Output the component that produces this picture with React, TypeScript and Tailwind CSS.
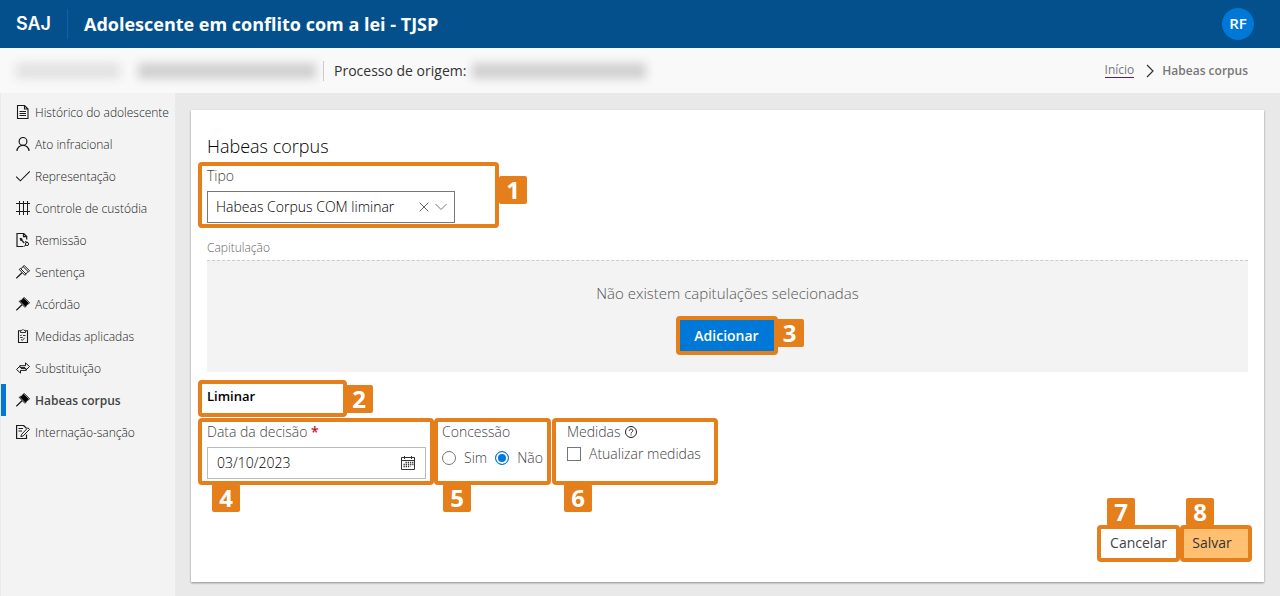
import { useState, type ReactNode } from "react";

const ink = {
  fill: "none",
  stroke: "#1b1b1b",
  strokeWidth: 1,
} as const;

function Icon({ children }: { children: ReactNode }) {
  return (
    <svg viewBox="0 0 14 14" className="h-3.5 w-3.5 shrink-0" aria-hidden="true" {...ink}>
      {children}
    </svg>
  );
}

const DocumentIcon = () => (
  <Icon>
    <path d="M1.500.5h7l3.500 3.500v9.500H1.500z M8.500.5v3.500h3.500" strokeWidth="1.100" />
    <path d="M3.500 6.500h6.500 M3.500 8.500h6.500 M3.500 10.500h6.500" />
  </Icon>
);

const PersonIcon = () => (
  <Icon>
    <circle cx="7" cy="4.4" r="3.9" strokeWidth="1.2" />
    <path d="M1 14c0-3.200 2.500-5.700 6-5.700s6 2.500 6 5.700" strokeWidth="1.2" />
  </Icon>
);

const CheckIcon = () => (
  <Icon>
    <path d="M.2 7.600l4.200 4.200L13.800 2.400" strokeWidth="1.100" />
  </Icon>
);

const GridIcon = () => (
  <Icon>
    <path d="M3.500 0v14 M7.500 0v14 M11.500 0v14 M0 2.500h14 M0 10.500h14" />
  </Icon>
);

const DocumentLinkIcon = () => (
  <Icon>
    <path d="M7.500 13.500H1V.5h6.700l3 3v3 M7.500.7v3h3 M4.500 6l3.800 4" strokeWidth="1.200" />
    <path d="M4 5.300l2.300.7-1.500 1.500z" fill="#1b1b1b" />
    <circle cx="11" cy="11" r="1.600" />
    <path d="M8 13.400l2-1.500 M9 8.500l3 1" />
  </Icon>
);

const GavelIcon = ({ solid = false }: { solid?: boolean }) => (
  <Icon>
    <path d="M.3 13.300L6 7.700" strokeWidth="1.300" />
    <path d="M3.200 4.400l1.200-1 5.700 5.700-1.200 1.200z M7 1.500L8.200.5l5.400 5.300-1.200 1.100z" />
    <path d="M4.800 4.300L7.700 1.700l4.300 4.200-2.700 2.800z" strokeWidth="1.100" fill={solid ? "#000" : "none"} stroke={solid ? "#000" : "none"} />
    <path d="M5 3.700l2.300-2.200 M9.900 8.800l2.300-2.200" />
  </Icon>
);

const ClipboardIcon = () => (
  <Icon>
    <path d="M4 1.800H2.500v11.700h9V1.800H10" strokeWidth="1.100" />
    <path d="M4.500 3.500V1.400H6L7 .4l1 1h1.500v2.100z M4.200 6.200l.7.700 1-1.200 M7 6.500h2.500 M4.200 8.500h2.500 M5 10.300l1.300 1.200 2.300-2.700" strokeWidth=".9" />
  </Icon>
);

const SwapIcon = () => (
  <Icon>
    <path d="M3.500 4.700h6V1.900L13.500 5.500 10 9V7.400H5 M10.500 9.400h-6v2.700L.5 8.500 4 5v1.600h5" />
  </Icon>
);

const EditDocumentIcon = () => (
  <Icon>
    <path d="M10.500 9.500v4H.6V.5h7l2.900 2.700 M2.500 3.500h4.500 M2.500 6h3.500" strokeWidth="1.200" />
    <path d="M5.500 9.500l6.300-6.700 1.700 1.600-6.300 6.500-2.300.7z" />
  </Icon>
);

const menu: { label: string; icon: ReactNode; active?: boolean }[] = [
  { label: "Histórico do adolescente", icon: <DocumentIcon /> },
  { label: "Ato infracional", icon: <PersonIcon /> },
  { label: "Representação", icon: <CheckIcon /> },
  { label: "Controle de custódia", icon: <GridIcon /> },
  { label: "Remissão", icon: <DocumentLinkIcon /> },
  { label: "Sentença", icon: <GavelIcon /> },
  { label: "Acórdão", icon: <GavelIcon solid /> },
  { label: "Medidas aplicadas", icon: <ClipboardIcon /> },
  { label: "Substituição", icon: <SwapIcon /> },
  { label: "Habeas corpus", icon: <GavelIcon solid />, active: true },
  { label: "Internação-sanção", icon: <EditDocumentIcon /> },
];

function Marker({ n, place, className = "", children }: { n: number; place: string; className?: string; children: ReactNode }) {
  return (
    <div className={`relative rounded-sm border-4 border-[#e47f1c] ${className}`}>
      {children}
      <span
        className={`absolute flex h-7 w-7 items-center justify-center rounded-xs bg-[#e47f1c] font-['Noto_Sans','Open_Sans',sans-serif] text-2xl leading-7 font-bold text-white ${place}`}
      >
        {n}
      </span>
    </div>
  );
}

function Redacted({ className }: { className: string }) {
  return <span aria-hidden="true" className={`h-4 blur-[5px] ${className}`} />;
}

export default function App() {
  const [tipo, setTipo] = useState("com");
  const [data, setData] = useState("03/10/2023");
  const [concessao, setConcessao] = useState("nao");

  return (
    <div className="flex min-h-screen flex-col bg-[#e9e9e9] font-['Open_Sans','Noto_Sans',sans-serif] text-sm text-[#333]">
      <header className="flex h-12 items-center bg-[#04508c] pr-[26px] pl-4 text-white">
        <span className="w-[51px] font-['Inter',sans-serif] text-lg font-semibold">SAJ</span>
        <span className="h-[30px] w-px bg-[#0d62a8]" />
        <h1 className="ml-4 text-lg leading-6 font-bold">Adolescente em conflito com a lei - TJSP</h1>
        <button type="button" className="ml-auto flex h-8 w-8 items-center justify-center rounded-full bg-[#0078d7] text-[15px] font-semibold">
          RF
        </button>
      </header>

      <div className="flex h-[45px] items-center bg-[#f9f9f9] pr-8 pl-4">
        <Redacted className="w-[104px] bg-[#e2e2e2]" />
        <Redacted className="ml-[18px] w-[178px] bg-[#d0d0d0]" />
        <span className="ml-[7px] h-5 w-px bg-[#ccc]" />
        <span className="ml-2.5 text-sm font-medium">Processo de origem:</span>
        <Redacted className="ml-1.5 w-[174px] bg-[#d0d0d0]" />
        <nav aria-label="Trilha" className="ml-auto flex items-center text-xs text-[#777]">
          <a href="#inicio" className="border-b border-[#551a8b] leading-[14px]">
            Início
          </a>
          <svg viewBox="0 0 8 14" className="mr-2 ml-3 h-3.5 w-2" fill="none" stroke="#333" strokeWidth="1.2" aria-hidden="true">
            <path d="M1 1l6 6-6 6" />
          </svg>
          <span className="font-semibold">Habeas corpus</span>
        </nav>
      </div>

      <div className="flex grow">
        <aside className="ml-px w-[174px] shrink-0 bg-[#f3f3f3] pt-[3px]">
          <ul>
            {menu.map((m) => (
              <li key={m.label}>
                <a
                  href="#menu"
                  className={`flex h-8 items-center gap-[5px] border-l-[5px] pl-2.5 text-xs whitespace-nowrap ${
                    m.active ? "border-[#0078d7] font-semibold text-[#444]" : "border-transparent font-light text-[#222]"
                  }`}
                >
                  {m.icon}
                  <span className="pt-0.5">{m.label}</span>
                </a>
              </li>
            ))}
          </ul>
        </aside>

        <main className="min-w-0 grow px-4 pt-[17px] pb-3.5">
          <form onSubmit={(e) => e.preventDefault()} className="flex flex-col bg-white pt-5 pr-3 pb-5 pl-[7px] shadow-[0_1px_2px_rgba(0,0,0,0.4)]">
            <h2 className="pl-[9px] text-lg leading-8 font-light text-black">Habeas corpus</h2>

            <Marker n={1} place="left-[calc(100%+4px)] top-2.5" className="w-[301px] px-[5px] pb-px">
              <label htmlFor="tipo" className="block text-sm leading-5 font-light text-[#444]">
                Tipo
              </label>
              <div className="relative mt-[5px] w-[248px]">
                <select
                  id="tipo"
                  value={tipo}
                  onChange={(e) => setTipo(e.target.value)}
                  className="h-8 w-full appearance-none rounded-none border border-[#777] bg-white pr-12 pl-2 text-sm font-light text-black"
                >
                  <option value="">Selecione</option>
                  <option value="com">Habeas Corpus COM liminar</option>
                  <option value="sem">Habeas Corpus SEM liminar</option>
                </select>
                <button type="button" aria-label="Limpar" onClick={() => setTipo("")} className="absolute top-[11px] right-[26px]">
                  <svg viewBox="0 0 10 10" className="h-2.5 w-2.5" fill="none" stroke="#666">
                    <path d="M.7.7l8.600 8.600 M9.300.7L.7 9.300" />
                  </svg>
                </button>
                <svg viewBox="0 0 12 8" className="pointer-events-none absolute top-3 right-2 h-2 w-3" fill="none" stroke="#777" aria-hidden="true">
                  <path d="M.5 1L6 6.500 11.500 1" />
                </svg>
              </div>
            </Marker>

            <p className="mt-2.5 pl-[9px] text-xs leading-5 font-light text-[#666]">Capitulação</p>
            <section className="mt-0.5 mr-1 ml-[9px] flex flex-col items-center border-t border-dashed border-[#ccc] bg-[#f3f3f3] pt-5 pb-4">
              <p className="text-[15px] leading-6 font-light text-[#555]">Não existem capitulações selecionadas</p>
              <Marker n={3} place="left-[calc(100%+2px)] -top-px" className="mt-[11px] mr-0.5 mb-px">
                <button type="button" className="block h-[31px] w-[94px] bg-[#0078d7] text-sm leading-5 font-semibold text-white">
                  Adicionar
                </button>
              </Marker>
            </section>

            <Marker n={2} place="left-[calc(100%+2px)] top-px" className="mt-2 w-[149px] px-[5px] pb-1">
              <h3 className="text-[13px] leading-[25px] font-semibold text-black">Liminar</h3>
            </Marker>

            <div className="mt-px flex text-sm font-light text-[#444]">
              <Marker n={4} place="left-2.5 top-[calc(100%+3px)]" className="w-[236px] px-[5px] pb-0.5">
                <label htmlFor="data" className="block leading-5">
                  Data da decisão <span className="font-semibold text-[#c8102e]">*</span>
                </label>
                <div className="mt-[5px] flex h-8 w-[219px] items-center border border-[#bbb] pr-2.5">
                  <input
                    id="data"
                    value={data}
                    onChange={(e) => setData(e.target.value)}
                    className="min-w-0 grow pl-[9px] text-sm text-black outline-none"
                  />
                  <button type="button" aria-label="Abrir calendário">
                    <svg viewBox="0 0 14 14" className="h-3.5 w-3.5" fill="none" stroke="#333">
                      <path d="M.5 1.500h13v12H.5z M.5 4.500h13 M3.500 0v3 M10.500 0v3" />
                      <path d="M4.500 6.500h8 M2.500 8.500h10 M2.500 10.500h7" strokeWidth="1.300" strokeDasharray="1.300 .9" />
                    </svg>
                  </button>
                </div>
              </Marker>

              <Marker n={5} place="left-[5px] top-[calc(100%+3px)]" className="w-[117px] pl-1">
                <fieldset>
                  <legend className="leading-5">Concessão</legend>
                  <div className="mt-1.5 flex items-center leading-5 whitespace-nowrap">
                    {[
                      ["sim", "Sim"],
                      ["nao", "Não"],
                    ].map(([value, text]) => (
                      <label key={value} className="mr-2 flex items-center gap-2 last:mr-0">
                        <input
                          type="radio"
                          name="concessao"
                          checked={concessao === value}
                          onChange={() => setConcessao(value)}
                          className="h-3.5 w-3.5 appearance-none rounded-full border border-[#767676] bg-white checked:border-[#0078d7] checked:bg-[#0078d7] checked:shadow-[inset_0_0_0_2px_white]"
                        />
                        {text}
                      </label>
                    ))}
                  </div>
                </fieldset>
              </Marker>

              <Marker n={6} place="left-2 top-[calc(100%+3px)]" className="ml-px w-[166px] pl-[11px]">
                <div className="flex items-center gap-1 leading-5">
                  <span>Medidas</span>
                  <svg viewBox="0 0 12 12" className="h-3 w-3" fill="none" stroke="#222" aria-hidden="true">
                    <circle cx="6" cy="6" r="5.500" />
                    <path d="M4.300 4.800c0-2.300 3.500-2.200 3.500-.2C7.800 6 6.100 6 6.100 7.500 M6.100 8.400v1" />
                  </svg>
                </div>
                <label className="mt-0.5 flex items-center gap-2 leading-5 whitespace-nowrap">
                  <input type="checkbox" className="h-3.5 w-3.5 appearance-none border border-[#767676] bg-white checked:bg-[#0078d7]" />
                  Atualizar medidas
                </label>
              </Marker>
            </div>

            <div className="mt-10 flex justify-end text-sm font-medium">
              <Marker n={7} place="left-1.5 bottom-[calc(100%+3px)]">
                <button type="button" className="block h-[29px] w-[75px] pb-0.5 text-[#444]">
                  Cancelar
                </button>
              </Marker>
              <Marker n={8} place="left-0.5 bottom-[calc(100%+3px)]">
                <button type="submit" className="block h-[29px] w-16 bg-[#ffc072] pr-2 pb-0.5 text-[#333]">
                  Salvar
                </button>
              </Marker>
            </div>
          </form>
        </main>
      </div>
    </div>
  );
}
